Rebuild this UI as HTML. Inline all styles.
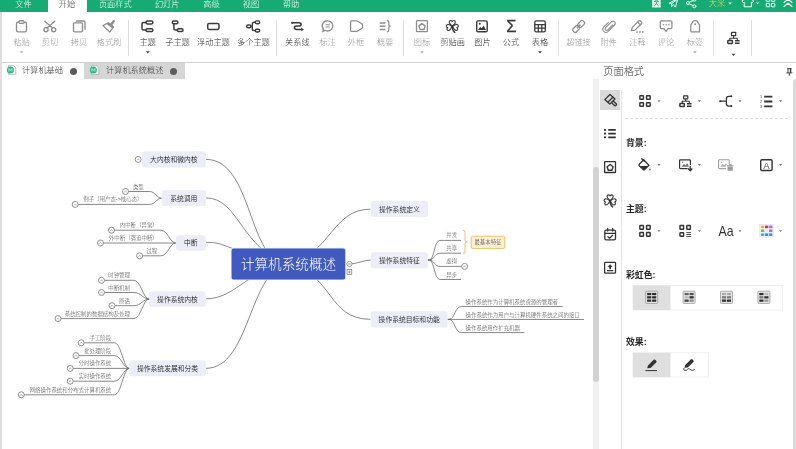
<!DOCTYPE html>
<html lang="zh-CN"><head><meta charset="utf-8"><title>计算机系统概述 - 思维导图</title>
<style>
html,body{margin:0;padding:0;}
body{width:796px;height:449px;overflow:hidden;background:#fff;position:relative;font-family:"Liberation Sans","Noto Sans CJK SC",sans-serif;}
#app{will-change:transform;position:absolute;left:0;top:0;width:796px;height:449px;overflow:hidden;background:#fff;}
.t{font-weight:300;position:absolute;height:14px;line-height:14px;white-space:nowrap;}
svg{overflow:visible;}
</style></head><body><div id="app">
<div style="position:absolute;left:0px;top:0px;width:796px;height:11.7px;background:#16ab74;"></div>
<div style="position:absolute;left:47.5px;top:0px;width:39px;height:12px;background:#fff;"></div>
<div class="t" style="top:-2.5px;left:-126.5px;width:300px;text-align:center;font-size:8.2px;color:#fff;font-weight:300;">文件</div>
<div class="t" style="top:-2.5px;left:-83px;width:300px;text-align:center;font-size:8.2px;color:#333;font-weight:300;">开始</div>
<div class="t" style="top:-2.5px;left:-34.7px;width:300px;text-align:center;font-size:8.2px;color:#fff;font-weight:300;">页面样式</div>
<div class="t" style="top:-2.5px;left:17.19999999999999px;width:300px;text-align:center;font-size:8.2px;color:#fff;font-weight:300;">幻灯片</div>
<div class="t" style="top:-2.5px;left:61.5px;width:300px;text-align:center;font-size:8.2px;color:#fff;font-weight:300;">高级</div>
<div class="t" style="top:-2.5px;left:101px;width:300px;text-align:center;font-size:8.2px;color:#fff;font-weight:300;">视图</div>
<div class="t" style="top:-2.5px;left:141px;width:300px;text-align:center;font-size:8.2px;color:#fff;font-weight:300;">帮助</div>
<div class="t" style="top:-2.8px;left:567px;width:300px;text-align:center;font-size:8.2px;color:#ffd84a;font-weight:300;">大米</div>
<div style="position:absolute;left:0px;top:12px;width:796px;height:50px;background:#fff;"></div>
<div style="position:absolute;left:0px;top:62px;width:796px;height:1px;background:#cfcfcf;"></div>
<div style="position:absolute;left:0px;top:12px;width:1.5px;height:437px;background:#dedede;"></div>
<div style="position:absolute;left:84px;top:63px;width:101px;height:15.5px;background:#d6d6d6;"></div>
<div class="t" style="top:63.599999999999994px;left:22px;text-align:left;font-size:8.2px;color:#333;font-weight:300;">计算机基础</div>
<div class="t" style="top:63.599999999999994px;left:106px;text-align:left;font-size:8.2px;color:#333;font-weight:300;">计算机系统概述</div>
<div style="position:absolute;left:70px;top:67.5px;width:7px;height:7px;border-radius:50%;background:#5c5c5c"></div>
<div style="position:absolute;left:170px;top:67.5px;width:7px;height:7px;border-radius:50%;background:#5c5c5c"></div>
<svg style="position:absolute;left:6.9px;top:65px;" width="10" height="11" viewBox="0 0 10 11"><path d="M1.400 0.600h5.200l2.200 2.200v6.800h-7.400z" fill="#fff" stroke="#a9a9a9" stroke-width="0.700"/><circle cx="3.400" cy="5" r="3.500" fill="#2bb585"/><path d="M1.900 3.400v3.200M1.900 3.600l1.500 1.800 1.500-1.800M4.900 3.400v3.200" stroke="#c9f7e4" stroke-width="0.800" fill="none"/></svg>
<svg style="position:absolute;left:89.9px;top:65px;" width="10" height="11" viewBox="0 0 10 11"><path d="M1.400 0.600h5.200l2.200 2.200v6.800h-7.400z" fill="#fff" stroke="#a9a9a9" stroke-width="0.700"/><circle cx="3.400" cy="5" r="3.500" fill="#2bb585"/><path d="M1.900 3.400v3.200M1.900 3.600l1.500 1.800 1.500-1.800M4.900 3.400v3.200" stroke="#c9f7e4" stroke-width="0.800" fill="none"/></svg>
<div style="position:absolute;left:593px;top:78.5px;width:6px;height:371px;background:#f1f1f1;"></div>
<div style="position:absolute;left:593px;top:167px;width:6px;height:215px;background:#d2d2d2;border-radius:3px 3px 3px 3px"></div>
<div style="position:absolute;left:792.5px;top:79px;width:4px;height:372px;background:#dadada;border-radius:3px 0 0 0"></div>
<div class="t" style="top:35.7px;left:-128.5px;width:300px;text-align:center;font-size:8.2px;color:#989898;font-weight:300;">粘贴</div>
<div class="t" style="top:35.7px;left:-100px;width:300px;text-align:center;font-size:8.2px;color:#989898;font-weight:300;">剪切</div>
<div class="t" style="top:35.7px;left:-71px;width:300px;text-align:center;font-size:8.2px;color:#989898;font-weight:300;">拷贝</div>
<div class="t" style="top:35.7px;left:-41px;width:300px;text-align:center;font-size:8.2px;color:#989898;font-weight:300;">格式刷</div>
<div class="t" style="top:35.7px;left:-2.1999999999999886px;width:300px;text-align:center;font-size:8.2px;color:#1e1e1e;font-weight:300;">主题</div>
<div class="t" style="top:35.7px;left:27.599999999999994px;width:300px;text-align:center;font-size:8.2px;color:#1e1e1e;font-weight:300;">子主题</div>
<div class="t" style="top:35.7px;left:63.5px;width:300px;text-align:center;font-size:8.2px;color:#1e1e1e;font-weight:300;">浮动主题</div>
<div class="t" style="top:35.7px;left:103.5px;width:300px;text-align:center;font-size:8.2px;color:#1e1e1e;font-weight:300;">多个主题</div>
<div class="t" style="top:35.7px;left:147.3px;width:300px;text-align:center;font-size:8.2px;color:#1e1e1e;font-weight:300;">关系线</div>
<div class="t" style="top:35.7px;left:177.5px;width:300px;text-align:center;font-size:8.2px;color:#989898;font-weight:300;">标注</div>
<div class="t" style="top:35.7px;left:206px;width:300px;text-align:center;font-size:8.2px;color:#989898;font-weight:300;">外框</div>
<div class="t" style="top:35.7px;left:235px;width:300px;text-align:center;font-size:8.2px;color:#989898;font-weight:300;">概要</div>
<div class="t" style="top:35.7px;left:272px;width:300px;text-align:center;font-size:8.2px;color:#989898;font-weight:300;">图标</div>
<div class="t" style="top:35.7px;left:302.7px;width:300px;text-align:center;font-size:8.2px;color:#1e1e1e;font-weight:300;">剪贴画</div>
<div class="t" style="top:35.7px;left:332.5px;width:300px;text-align:center;font-size:8.2px;color:#1e1e1e;font-weight:300;">图片</div>
<div class="t" style="top:35.7px;left:361px;width:300px;text-align:center;font-size:8.2px;color:#1e1e1e;font-weight:300;">公式</div>
<div class="t" style="top:35.7px;left:390px;width:300px;text-align:center;font-size:8.2px;color:#1e1e1e;font-weight:300;">表格</div>
<div class="t" style="top:35.7px;left:428.5px;width:300px;text-align:center;font-size:8.2px;color:#989898;font-weight:300;">超链接</div>
<div class="t" style="top:35.7px;left:458.6px;width:300px;text-align:center;font-size:8.2px;color:#989898;font-weight:300;">附件</div>
<div class="t" style="top:35.7px;left:487.5px;width:300px;text-align:center;font-size:8.2px;color:#989898;font-weight:300;">注释</div>
<div class="t" style="top:35.7px;left:516px;width:300px;text-align:center;font-size:8.2px;color:#989898;font-weight:300;">评论</div>
<div class="t" style="top:35.7px;left:545px;width:300px;text-align:center;font-size:8.2px;color:#989898;font-weight:300;">标签</div>
<div style="position:absolute;left:127.80000000000001px;top:19.5px;width:1px;height:36.5px;background:#dedede;"></div>
<div style="position:absolute;left:275.9px;top:19.5px;width:1px;height:36.5px;background:#dedede;"></div>
<div style="position:absolute;left:402.9px;top:19.5px;width:1px;height:36.5px;background:#dedede;"></div>
<div style="position:absolute;left:557.8px;top:19.5px;width:1px;height:36.5px;background:#dedede;"></div>
<div style="position:absolute;left:712.9px;top:19.5px;width:1px;height:36.5px;background:#dedede;"></div>
<div style="position:absolute;left:750.9px;top:19.5px;width:1px;height:36.5px;background:#dedede;"></div>
<svg style="position:absolute;left:0px;top:0px;" width="796" height="62" viewBox="0 0 796 62"><path d="M19.6 51.3h3.8l-1.9 2.2z" fill="#b0b0b0"/><path d="M145.9 51.3h3.8l-1.9 2.2z" fill="#444"/><path d="M420.1 51.3h3.8l-1.9 2.2z" fill="#b0b0b0"/><path d="M538.1 51.3h3.8l-1.9 2.2z" fill="#444"/><path d="M693.1 51.3h3.8l-1.9 2.2z" fill="#b0b0b0"/><path d="M731.6 53.8h3.8l-1.9 2.2z" fill="#444"/><g fill="none" stroke="#8e8e8e" stroke-width="1.35" stroke-linecap="round" stroke-linejoin="round"><rect x="16.5" y="22.2" width="10" height="9.6" rx="1.5"/><rect x="18.9" y="20.7" width="5.2" height="2.6" rx="1.3" fill="#fff"/></g><g fill="none" stroke="#8e8e8e" stroke-width="1.35" stroke-linecap="round" stroke-linejoin="round"><path d="M44.8 21.2L52.6 28M54.8 21.2L47 28"/><circle cx="46" cy="29.7" r="2.05"/><circle cx="53.7" cy="29.7" r="2.05"/></g><g fill="none" stroke="#8e8e8e" stroke-width="1.35" stroke-linecap="round" stroke-linejoin="round"><rect x="73.5" y="22.9" width="9" height="8.900" rx="1"/><path d="M76.4 21h7.400q1.200 0 1.200 1.200v7"/></g><g fill="none" stroke="#8e8e8e" stroke-width="1.25" stroke-linecap="round" stroke-linejoin="round"><path d="M108.300 22.700L113.500 26.800L109.600 32L103 25.600Z"/><path d="M111.300 24.300L113.700 21.200" stroke-width="2.500"/></g><path d="M108.300 22.300L114 26.700L112.500 28.600L106.900 24.200Z" fill="#8e8e8e"/><g fill="none" stroke="#3a3a3a" stroke-width="1.5" stroke-linecap="round" stroke-linejoin="round"><rect x="146" y="21.100" width="6.900" height="2.800" rx="1.400"/><rect x="146" y="28.800" width="6.900" height="2.800" rx="1.400"/><path d="M145.800 22.600h-2.400q-1.400 0-1.400 1.400v4.700q0 1.400 1.400 1.400h2.400"/></g><g fill="none" stroke="#3a3a3a" stroke-width="1.5" stroke-linecap="round" stroke-linejoin="round"><rect x="172.300" y="21.100" width="5.600" height="2.700" rx="1.350"/><rect x="177.300" y="28.800" width="5.700" height="2.800" rx="1.400"/><path d="M173.900 24.500v4.200q0 1.400 1.400 1.400h1.400"/></g><g fill="none" stroke="#3a3a3a" stroke-width="1.5" stroke-linecap="round" stroke-linejoin="round"><rect x="207.700" y="23.600" width="11.300" height="5.900" rx="1.400"/></g><g fill="none" stroke="#3a3a3a" stroke-width="1.4" stroke-linecap="round" stroke-linejoin="round"><rect x="246.700" y="25" width="4.200" height="2.800" rx="1.400"/><rect x="255.300" y="20.900" width="4.400" height="2.800" rx="1.400"/><rect x="255.300" y="29.200" width="4.400" height="2.800" rx="1.400"/><path d="M251.100 26.400h1.200M255.100 22.300h-1q-1.800 0-1.800 1.800v4.700q0 1.800 1.800 1.800h1"/></g><g fill="none" stroke="#3a3a3a" stroke-width="1.5" stroke-linecap="round" stroke-linejoin="round"><path d="M292.500 22.800H298.900Q301.100 22.800 301.100 24.400Q301.100 26.100 298.900 26.100H296.600Q294.400 26.100 294.400 27.700Q294.400 29.400 296.600 29.400H301.200"/></g><circle cx="292.200" cy="22.800" r="1.150" fill="#3a3a3a"/><path d="M301.200 27.500l2.700 1.900-2.700 1.900z" fill="#3a3a3a"/><g fill="none" stroke="#8e8e8e" stroke-width="1.3" stroke-linecap="round" stroke-linejoin="round"><path d="M327.800 20.800a5.100 5.100 0 1 1 -2.800 9.400l-2.200 1.600 .500-2.800a5.100 5.100 0 0 1 4.500-8.200z"/><path d="M325.600 24.800h4.300M325.600 27h4.300" stroke-width="1.100" stroke-linecap="butt"/></g><g fill="none" stroke="#8e8e8e" stroke-width="1.3" stroke-linecap="round" stroke-linejoin="round"><path d="M351.400 20.900h5q.800 0 1.400 .400l4.200 2.700q.500 .400 .500 1v2.300q0 .600-.500 1l-4.200 2.700q-.600 .400-1.400 .400h-5q-.800 0-.800-.800v-8.900q0-.800 .800-.800z"/></g><g fill="none" stroke="#8e8e8e" stroke-width="1.45" stroke-linecap="round" stroke-linejoin="round"><path d="M379.700 22.900h5.800M379.700 26.200h5.800M379.700 29.500h5.800" stroke-linecap="butt"/></g><g fill="none" stroke="#8e8e8e" stroke-width="1.2" stroke-linecap="round" stroke-linejoin="round"><path d="M387.300 20.600q1.500 0 1.500 1.500v2.600q0 1.500 1.500 1.500q-1.500 0-1.500 1.500v2.600q0 1.500-1.500 1.500"/></g><g fill="none" stroke="#8e8e8e" stroke-width="1.3" stroke-linecap="round" stroke-linejoin="round"><rect x="416.500" y="20.700" width="10.900" height="11" rx="0.800"/><path d="M422 23.600l3.100 2.300-1.200 3.600h-3.800l-1.200-3.600z" stroke-width="1.400"/></g><g fill="none" stroke="#3a3a3a" stroke-width="1.25" stroke-linecap="round" stroke-linejoin="round"><path d="M0 0C-1.500 -1.300 -3.300 -2.500 -3.300 -4.100C-3.300 -5.300 -2.500 -5.900 -1.700 -5.900C-.900 -5.900 -.200 -5.400 0 -4.700C.200 -5.400 .900 -5.900 1.700 -5.900C2.500 -5.900 3.300 -5.300 3.300 -4.100C3.300 -2.500 1.500 -1.300 0 0Z" transform="translate(452.3 26.0) scale(0.93)"/><path d="M0 0C-1.500 -1.300 -3.300 -2.500 -3.300 -4.100C-3.300 -5.300 -2.500 -5.900 -1.700 -5.900C-.900 -5.900 -.200 -5.400 0 -4.700C.200 -5.400 .900 -5.900 1.700 -5.900C2.500 -5.900 3.300 -5.300 3.300 -4.100C3.300 -2.500 1.500 -1.300 0 0Z" transform="translate(452.0 26.5) rotate(-104) scale(0.93)"/><path d="M0 0C-1.500 -1.300 -3.300 -2.500 -3.300 -4.100C-3.300 -5.300 -2.500 -5.900 -1.700 -5.900C-.900 -5.900 -.200 -5.400 0 -4.700C.200 -5.400 .900 -5.900 1.700 -5.900C2.500 -5.900 3.300 -5.300 3.300 -4.100C3.300 -2.500 1.500 -1.300 0 0Z" transform="translate(452.6 26.5) rotate(104) scale(0.93)"/><path d="M452.3 26.3q0 4.200 2.500 6.200" stroke-width="1.45"/></g><g fill="none" stroke="#3a3a3a" stroke-width="1.4" stroke-linecap="round" stroke-linejoin="round"><rect x="476.700" y="20.900" width="10.500" height="10.900" rx="1.300"/></g><path d="M478 29.900l2.300-3.200 1.400 1.500 1.900-2.700 2.400 4.400z" fill="#3a3a3a"/><circle cx="479.700" cy="23.700" r="1" fill="#3a3a3a"/><text x="511.300" y="32.400" font-size="16.600" text-anchor="middle" fill="#3a3a3a" stroke="#3a3a3a" stroke-width="0.280" font-family="Liberation Sans, sans-serif">Σ</text><g fill="none" stroke="#3a3a3a" stroke-width="1.3" stroke-linecap="round" stroke-linejoin="round"><rect x="534.800" y="20.900" width="10.500" height="11" rx="1.300"/></g><g fill="none" stroke="#3a3a3a" stroke-width="1.25" stroke-linecap="round" stroke-linejoin="round"><path d="M534.800 24.600h10.500M534.800 28.200h10.500M538.300 24.600v7.300M541.800 24.600v7.300" stroke-linecap="butt"/></g><g fill="none" stroke="#8e8e8e" stroke-width="1.3" stroke-linecap="round" stroke-linejoin="round"><rect x="-3.500" y="-2.300" width="7" height="4.600" rx="1.500" transform="translate(581.200 23.900) rotate(-45)"/><rect x="-3.500" y="-2.300" width="7" height="4.600" rx="1.500" transform="translate(576.100 29) rotate(-45)"/><path d="M577.300 27.800l2.700-2.700" stroke-width="1.500"/></g><g fill="none" stroke="#8e8e8e" stroke-width="1.1" stroke-linecap="round" stroke-linejoin="round"><path d="M612.600 25l-4.800 4.800q-1.100 1.100-2.200 0t0-2.200l5.800-5.800q1.600-1.600 3.200 0t0 3.200l-6.400 6.400q-2.200 2.200-4.400 0t0-4.400l4.600-4.600"/></g><g fill="none" stroke="#8e8e8e" stroke-width="1.25" stroke-linecap="round" stroke-linejoin="round"><path d="M631.400 30.600l.900-3.200 6.400-6.400q.900-.900 1.800 0l.900 .900q.900 .900 0 1.800l-6.400 6.400z"/><path d="M637.700 22.100l2.700 2.700"/></g><rect x="636.200" y="31.300" width="1.500" height="1.400" fill="#8e8e8e"/><rect x="639.100" y="31.300" width="1.500" height="1.400" fill="#8e8e8e"/><rect x="642" y="31.300" width="1.500" height="1.400" fill="#8e8e8e"/><g fill="none" stroke="#8e8e8e" stroke-width="1.3" stroke-linecap="round" stroke-linejoin="round"><path d="M661.300 20.800h9.600q1 0 1 1v5.800q0 1-1 1h-2.900l-2 2.700-2-2.700h-2.700q-1 0-1-1v-5.800q0-1 1-1z"/></g><circle cx="663.300" cy="24.700" r="0.800" fill="#8e8e8e"/><circle cx="666.100" cy="24.700" r="0.800" fill="#8e8e8e"/><circle cx="668.900" cy="24.700" r="0.800" fill="#8e8e8e"/><g fill="none" stroke="#8e8e8e" stroke-width="1.3" stroke-linecap="round" stroke-linejoin="round"><path d="M690.800 31.400v-6.600l2.500-3.600q.400-.500 1-.500h1.800q.600 0 1 .500l2.400 3.600v6.600q0 .400-.400 .400h-7.900q-.400 0-.400-.400z"/></g><circle cx="695.200" cy="24.300" r="0.950" fill="#8e8e8e"/><g fill="none" stroke="#3a3a3a" stroke-width="1.3" stroke-linecap="round" stroke-linejoin="round"><rect x="731.500" y="32.400" width="4.200" height="3.200" rx="0.300"/><path d="M733.600 36v2.200h-3.800v1.600M733.600 38.200h3.700v1.400" stroke-width="1.100"/><rect x="727.800" y="40.400" width="4.600" height="3" rx="0.600" stroke-width="1.500"/><path d="M735 40.700h4.600M735 43.200h4.600" stroke-width="1.500" stroke-linecap="butt"/></g></svg>
<svg style="position:absolute;left:0px;top:0px;overflow:hidden;" width="796" height="12" viewBox="0 0 796 12"><rect x="652.100" y="-1" width="8.600" height="8.500" fill="#fff" opacity="0.880"/><path d="M654 1.600h1.800v-2.600M658.800 1.600h-1.800v-2.600M654.600 5.600l1.800-2 1.800 2M656.400 3.600v-2" fill="none" stroke="#16ab74" stroke-width="0.900"/><g fill="none" stroke="#fff" stroke-width="1.0" stroke-linecap="round" stroke-linejoin="round"><path d="M669.400 3l8.400-4.200-2.400 8.400-2.200-2.600-1.600 2.200v-3z"/><path d="M677.600-1l-6 4.800"/></g><g fill="none" stroke="#fff" stroke-width="1.0" stroke-linecap="round" stroke-linejoin="round"><circle cx="694.400" cy="-0.200" r="1.500"/><circle cx="688" cy="3" r="1.500"/><circle cx="694.400" cy="6.300" r="1.500"/><path d="M689.400 2.300l3.600-1.800M689.400 3.700l3.600 1.900"/></g><path d="M728.400 2.400h3.400l-1.700 2z" fill="#fff"/><path d="M755.900 2.400h3.400l-1.700 2z" fill="#fff"/><g fill="none" stroke="#fff" stroke-width="1.0" stroke-linecap="round" stroke-linejoin="round"><path d="M745-1.200l-3 2 1.200 2 1-.600v4.600h7.200v-4.600l1 .600 1.200-2-3-2q-1.800 1.600-3.600 0z"/></g><g fill="none" stroke="#fff" stroke-width="1.0" stroke-linecap="round" stroke-linejoin="round"><rect x="766.200" y="-2" width="3.400" height="3.400" rx="0.600"/><rect x="771.400" y="-2" width="3.400" height="3.400" rx="0.600"/><rect x="766.200" y="3.400" width="3.400" height="3.400" rx="0.600"/><rect x="771.400" y="3.400" width="3.400" height="3.400" rx="0.600"/></g><g fill="none" stroke="#fff" stroke-width="1.1" stroke-linecap="round" stroke-linejoin="round"><path d="M784 2.500l4-3.200 4 3.200M784 6.500l4-3.200 4 3.200"/></g></svg>
<svg style="position:absolute;left:0px;top:0px;" width="796" height="449" viewBox="0 0 796 449"><path d="M206 159.4C253.5 159.4 247.5 264.9 288.4 264" fill="none" stroke="#606060" stroke-width="0.75"/><path d="M206 197.9C238.9 197.9 241.1 249.5 288.4 264" fill="none" stroke="#606060" stroke-width="0.75"/><path d="M206 242.4C227.2 242.4 211.9 245.5 288.4 264" fill="none" stroke="#606060" stroke-width="0.75"/><path d="M206 298.8C235.8 298.8 247.9 268.9 288.4 264" fill="none" stroke="#606060" stroke-width="0.75"/><path d="M206 368.3C250.6 368.3 248.4 269.6 288.4 264" fill="none" stroke="#606060" stroke-width="0.75"/><path d="M370.6 209.2C331.7 209.2 331.0 254.0 288.4 264" fill="none" stroke="#606060" stroke-width="0.75"/><path d="M370.6 319.3C327.1 319.3 333.4 274.0 288.4 264" fill="none" stroke="#606060" stroke-width="0.75"/><path d="M370.8 260C364 260.2 358 263.200 352 263.800" fill="none" stroke="#606060" stroke-width="0.75"/><path d="M128.6 191.5L149.5 191.5C154.99 191.5 156.82 198.2 161.7 198.2" fill="none" stroke="#606060" stroke-width="0.75"/><circle cx="125.5" cy="191.5" r="3" fill="#fff" stroke="#606060" stroke-width="0.7"/><path d="M124.3 192.4l1.200-1.500 1.200 1.500" fill="none" stroke="#606060" stroke-width="0.45"/><path d="M78.3 204.4L149.5 204.4C154.99 204.4 156.82 198.2 161.7 198.2" fill="none" stroke="#606060" stroke-width="0.75"/><circle cx="75.2" cy="204.4" r="3" fill="#fff" stroke="#606060" stroke-width="0.7"/><path d="M74.0 205.3l1.200-1.500 1.200 1.500" fill="none" stroke="#606060" stroke-width="0.45"/><path d="M114.6 230.2L161 230.2C167.66 230.2 169.88 243 175.8 243" fill="none" stroke="#606060" stroke-width="0.75"/><circle cx="111.5" cy="230.2" r="3" fill="#fff" stroke="#606060" stroke-width="0.7"/><path d="M110.3 231.1l1.200-1.500 1.200 1.500" fill="none" stroke="#606060" stroke-width="0.45"/><path d="M103.6 243L175.8 243" fill="none" stroke="#606060" stroke-width="0.75"/><circle cx="100.5" cy="243" r="3" fill="#fff" stroke="#606060" stroke-width="0.7"/><path d="M99.3 243.9l1.200-1.500 1.200 1.500" fill="none" stroke="#606060" stroke-width="0.45"/><path d="M142.7 255.8L161 255.8C167.66 255.8 169.88 243 175.8 243" fill="none" stroke="#606060" stroke-width="0.75"/><circle cx="139.6" cy="255.8" r="3" fill="#fff" stroke="#606060" stroke-width="0.7"/><path d="M138.4 256.7l1.200-1.500 1.200 1.500" fill="none" stroke="#606060" stroke-width="0.45"/><path d="M104.6 280.3L134 280.3C140.84 280.3 143.12 299 149.2 299" fill="none" stroke="#606060" stroke-width="0.75"/><circle cx="101.5" cy="280.3" r="3" fill="#fff" stroke="#606060" stroke-width="0.7"/><path d="M100.3 281.2l1.200-1.500 1.200 1.500" fill="none" stroke="#606060" stroke-width="0.45"/><path d="M104.6 292.5L134 292.5C140.84 292.5 143.12 299 149.2 299" fill="none" stroke="#606060" stroke-width="0.75"/><circle cx="101.5" cy="292.5" r="3" fill="#fff" stroke="#606060" stroke-width="0.7"/><path d="M100.3 293.4l1.200-1.500 1.200 1.500" fill="none" stroke="#606060" stroke-width="0.45"/><path d="M115.1 305.7L134 305.7C140.84 305.7 143.12 299 149.2 299" fill="none" stroke="#606060" stroke-width="0.75"/><circle cx="112" cy="305.7" r="3" fill="#fff" stroke="#606060" stroke-width="0.7"/><path d="M110.8 306.59999999999997l1.200-1.500 1.200 1.500" fill="none" stroke="#606060" stroke-width="0.45"/><path d="M61.1 318.6L134 318.6C140.84 318.6 143.12 299 149.2 299" fill="none" stroke="#606060" stroke-width="0.75"/><circle cx="58" cy="318.6" r="3" fill="#fff" stroke="#606060" stroke-width="0.7"/><path d="M56.8 319.5l1.200-1.500 1.200 1.500" fill="none" stroke="#606060" stroke-width="0.45"/><path d="M84.3 342.8L114.5 342.8C121.16000000000001 342.8 123.38000000000001 368.4 129.3 368.4" fill="none" stroke="#606060" stroke-width="0.75"/><circle cx="81.2" cy="342.8" r="3" fill="#fff" stroke="#606060" stroke-width="0.7"/><path d="M80.0 343.7l1.200-1.500 1.200 1.500" fill="none" stroke="#606060" stroke-width="0.45"/><path d="M79.1 355.6L114.5 355.6C121.16000000000001 355.6 123.38000000000001 368.4 129.3 368.4" fill="none" stroke="#606060" stroke-width="0.75"/><circle cx="76" cy="355.6" r="3" fill="#fff" stroke="#606060" stroke-width="0.7"/><path d="M74.8 356.5l1.200-1.500 1.200 1.500" fill="none" stroke="#606060" stroke-width="0.45"/><path d="M73.3 368.4L129.3 368.4" fill="none" stroke="#606060" stroke-width="0.75"/><circle cx="70.2" cy="368.4" r="3" fill="#fff" stroke="#606060" stroke-width="0.7"/><path d="M69.0 369.29999999999995l1.200-1.500 1.200 1.500" fill="none" stroke="#606060" stroke-width="0.45"/><path d="M73.3 381.2L114.5 381.2C121.16000000000001 381.2 123.38000000000001 368.4 129.3 368.4" fill="none" stroke="#606060" stroke-width="0.75"/><circle cx="70.2" cy="381.2" r="3" fill="#fff" stroke="#606060" stroke-width="0.7"/><path d="M69.0 382.09999999999997l1.200-1.500 1.200 1.500" fill="none" stroke="#606060" stroke-width="0.45"/><path d="M24.400000000000002 394.8L114.5 394.8C121.16000000000001 394.8 123.38000000000001 368.4 129.3 368.4" fill="none" stroke="#606060" stroke-width="0.75"/><circle cx="21.3" cy="394.8" r="3" fill="#fff" stroke="#606060" stroke-width="0.7"/><path d="M20.1 395.7l1.200-1.500 1.200 1.500" fill="none" stroke="#606060" stroke-width="0.45"/><circle cx="138.200" cy="159.400" r="3" fill="#fff" stroke="#606060" stroke-width="0.7"/><path d="M137 160.300l1.200-1.500 1.200 1.500" fill="none" stroke="#606060" stroke-width="0.45"/><path d="M427.8 260L429.40000000000003 260C434.17 260 434.17 240.4 440 240.4L461 240.4" fill="none" stroke="#606060" stroke-width="0.75"/><path d="M427.8 260L429.40000000000003 260C434.17 260 434.17 253.2 440 253.2L461 253.2" fill="none" stroke="#606060" stroke-width="0.75"/><path d="M427.8 260L429.40000000000003 260C434.17 260 434.17 266.4 440 266.4L461.6 266.4" fill="none" stroke="#606060" stroke-width="0.75"/><circle cx="464.6" cy="266.4" r="3" fill="#fff" stroke="#606060" stroke-width="0.7"/><path d="M463.40000000000003 267.29999999999995l1.200-1.500 1.200 1.500" fill="none" stroke="#606060" stroke-width="0.45"/><path d="M427.8 260L429.40000000000003 260C434.17 260 434.17 279.5 440 279.5L461 279.5" fill="none" stroke="#606060" stroke-width="0.75"/><path d="M447.6 319.4L449.20000000000005 319.4C454.735 319.4 454.735 306.5 461.5 306.5L562.6 306.5" fill="none" stroke="#606060" stroke-width="0.75"/><path d="M447.6 319.4L584 319.5" fill="none" stroke="#606060" stroke-width="0.75"/><path d="M447.6 319.4L449.20000000000005 319.4C454.735 319.4 454.735 332.6 461.5 332.6L524.4 332.6" fill="none" stroke="#606060" stroke-width="0.75"/><path d="M462.800 230.200q2.200 0 2.200 2.200v7.200q0 2.200 2.200 2.200q-2.200 0-2.200 2.200v7.200q0 2.200-2.200 2.200" fill="none" stroke="#f0ad3c" stroke-width="0.8"/><rect x="471.200" y="236.200" width="33.600" height="12.200" rx="1.500" fill="#fdf1d6" stroke="#f0ad3c" stroke-width="0.8"/><rect x="142" y="151.2" width="63.80000000000001" height="16.400000000000006" rx="2.600" fill="#ecedf7"/><rect x="161.7" y="190.2" width="44.10000000000002" height="15.800000000000011" rx="2.600" fill="#ecedf7"/><rect x="175.8" y="235.2" width="30.0" height="15.5" rx="2.600" fill="#ecedf7"/><rect x="149.2" y="291.2" width="56.60000000000002" height="15.600000000000023" rx="2.600" fill="#ecedf7"/><rect x="129.3" y="360.6" width="76.5" height="15.599999999999966" rx="2.600" fill="#ecedf7"/><rect x="370.8" y="201" width="57.19999999999999" height="16" rx="2.600" fill="#ecedf7"/><rect x="370.8" y="252.2" width="57.19999999999999" height="16.0" rx="2.600" fill="#ecedf7"/><rect x="370.8" y="311.2" width="76.80000000000001" height="16.400000000000034" rx="2.600" fill="#ecedf7"/><rect x="230.900" y="247.800" width="115" height="32.300" rx="2.500" fill="#d9e5ff"/><rect x="231.600" y="248.500" width="113.600" height="31" rx="2" fill="#405abf"/><circle cx="349.400" cy="264" r="2.600" fill="#fff" stroke="#606060" stroke-width="0.600"/><path d="M348 264h2.800" stroke="#606060" stroke-width="0.550"/><rect x="347" y="269.600" width="4.800" height="4.800" fill="#fff" stroke="#606060" stroke-width="0.600"/><path d="M348 272h2.800M349.400 270.600v2.800" stroke="#606060" stroke-width="0.550"/></svg>
<div class="t" style="top:179.5px;left:-156.2px;width:300px;text-align:right;font-size:5.45px;color:#484848;font-weight:300;">类型</div>
<div class="t" style="top:192.4px;left:-157.39999999999998px;width:300px;text-align:right;font-size:5.45px;color:#484848;font-weight:300;">例子（用户态-&gt;核心态）</div>
<div class="t" style="top:218.2px;left:-142.2px;width:300px;text-align:right;font-size:5.45px;color:#484848;font-weight:300;">内中断（异常）</div>
<div class="t" style="top:231.0px;left:-142.2px;width:300px;text-align:right;font-size:5.45px;color:#484848;font-weight:300;">外中断（强迫中断）</div>
<div class="t" style="top:243.8px;left:-142.7px;width:300px;text-align:right;font-size:5.45px;color:#484848;font-weight:300;">过程</div>
<div class="t" style="top:268.3px;left:-170px;width:300px;text-align:right;font-size:5.45px;color:#484848;font-weight:300;">时钟管理</div>
<div class="t" style="top:280.5px;left:-170px;width:300px;text-align:right;font-size:5.45px;color:#484848;font-weight:300;">中断机制</div>
<div class="t" style="top:293.7px;left:-170px;width:300px;text-align:right;font-size:5.45px;color:#484848;font-weight:300;">原语</div>
<div class="t" style="top:306.6px;left:-170px;width:300px;text-align:right;font-size:5.45px;color:#484848;font-weight:300;">系统控制的数据结构及处理</div>
<div class="t" style="top:330.8px;left:-188.8px;width:300px;text-align:right;font-size:5.45px;color:#484848;font-weight:300;">手工阶段</div>
<div class="t" style="top:343.6px;left:-188.8px;width:300px;text-align:right;font-size:5.45px;color:#484848;font-weight:300;">批处理阶段</div>
<div class="t" style="top:356.4px;left:-188.8px;width:300px;text-align:right;font-size:5.45px;color:#484848;font-weight:300;">分时操作系统</div>
<div class="t" style="top:369.2px;left:-188.8px;width:300px;text-align:right;font-size:5.45px;color:#484848;font-weight:300;">实时操作系统</div>
<div class="t" style="top:382.8px;left:-188.8px;width:300px;text-align:right;font-size:5.45px;color:#484848;font-weight:300;">网络操作系统和分布式计算机系统</div>
<div class="t" style="top:228.4px;left:446.3px;text-align:left;font-size:5.45px;color:#484848;font-weight:300;">并发</div>
<div class="t" style="top:241.2px;left:446.3px;text-align:left;font-size:5.45px;color:#484848;font-weight:300;">共享</div>
<div class="t" style="top:254.39999999999998px;left:446.3px;text-align:left;font-size:5.45px;color:#484848;font-weight:300;">虚拟</div>
<div class="t" style="top:267.5px;left:446.3px;text-align:left;font-size:5.45px;color:#484848;font-weight:300;">异步</div>
<div class="t" style="top:294.5px;left:465.6px;text-align:left;font-size:5.45px;color:#484848;font-weight:300;">操作系统作为计算机系统资源的管理者</div>
<div class="t" style="top:307.5px;left:465.6px;text-align:left;font-size:5.45px;color:#484848;font-weight:300;">操作系统作为用户与计算机硬件系统之间的接口</div>
<div class="t" style="top:320.6px;left:465.6px;text-align:left;font-size:5.45px;color:#484848;font-weight:300;">操作系统用作扩充机器</div>
<div class="t" style="top:235.3px;left:338px;width:300px;text-align:center;font-size:5.45px;color:#333;font-weight:300;">最基本特征</div>
<div class="t" style="top:152.89999999999998px;left:23.900000000000006px;width:300px;text-align:center;font-size:6.8px;color:#1c1c1c;font-weight:350;">大内核和微内核</div>
<div class="t" style="top:191.6px;left:33.75px;width:300px;text-align:center;font-size:6.8px;color:#1c1c1c;font-weight:350;">系统调用</div>
<div class="t" style="top:236.45px;left:40.80000000000001px;width:300px;text-align:center;font-size:6.8px;color:#1c1c1c;font-weight:350;">中断</div>
<div class="t" style="top:292.5px;left:27.5px;width:300px;text-align:center;font-size:6.8px;color:#1c1c1c;font-weight:350;">操作系统内核</div>
<div class="t" style="top:361.9px;left:17.55000000000001px;width:300px;text-align:center;font-size:6.8px;color:#1c1c1c;font-weight:350;">操作系统发展和分类</div>
<div class="t" style="top:202.5px;left:249.39999999999998px;width:300px;text-align:center;font-size:6.8px;color:#1c1c1c;font-weight:350;">操作系统定义</div>
<div class="t" style="top:253.7px;left:249.39999999999998px;width:300px;text-align:center;font-size:6.8px;color:#1c1c1c;font-weight:350;">操作系统特征</div>
<div class="t" style="top:312.9px;left:259.20000000000005px;width:300px;text-align:center;font-size:6.8px;color:#1c1c1c;font-weight:350;">操作系统目标和功能</div>
<div class="t" style="top:257.6px;left:138.5px;width:300px;text-align:center;font-size:13.6px;color:#fff;font-weight:300;">计算机系统概述</div>
<div style="position:absolute;left:599px;top:63px;width:197px;height:386px;background:#fff;"></div>
<div style="position:absolute;left:792.5px;top:79px;width:3.5px;height:370px;background:#dadada;border-radius:3px 0 0 0;"></div>
<div class="t" style="top:64.8px;left:603.3px;text-align:left;font-size:10.2px;color:#333;font-weight:300;">页面格式</div>
<div style="position:absolute;left:621px;top:89.5px;width:0.8px;height:360px;background:#e4e4e4;"></div>
<div style="position:absolute;left:600px;top:90px;width:20px;height:20px;background:#d9d9d9;"></div>
<div style="position:absolute;left:625px;top:117.600px;width:163px;height:0;border-top:0.8px dashed #e0e0e0"></div>
<svg style="position:absolute;left:0px;top:0px;" width="796" height="449" viewBox="0 0 796 449"><path d="M787.200 68.600h4.400M788 68.600v4.200M790.800 68.600v4.200M786.400 72.900h6M789.300 73v2.800" fill="none" stroke="#333" stroke-width="0.9"/><path d="M789.800 68.600h1v4.200h-1z" fill="#333"/><g fill="none" stroke="#333" stroke-width="1.3" stroke-linecap="round" stroke-linejoin="round"><path d="M604.800 99.600L610 94.500L615 99L609.800 104.100Z"/><path d="M608.300 101.700L612.800 97.300"/><rect x="0" y="-1.200" width="5.200" height="2.400" rx="0.900" transform="translate(612.200 101.800) rotate(42)" fill="#d9d9d9"/></g><g fill="none" stroke="#333" stroke-width="1.8" stroke-linecap="round" stroke-linejoin="round"><path d="M608.200 129.900h7.600M608.200 133.600h7.600M608.200 137.300h7.600" stroke-linecap="butt"/></g><rect x="604" y="129" width="2" height="1.800" fill="#333"/><rect x="604" y="132.700" width="2" height="1.800" fill="#333"/><rect x="604" y="136.400" width="2" height="1.800" fill="#333"/><g fill="none" stroke="#333" stroke-width="1.3" stroke-linecap="round" stroke-linejoin="round"><rect x="604.600" y="161.600" width="10.900" height="10.900" rx="0.600"/><path d="M610.100 164.500l3 2.200-1.150 3.500h-3.700l-1.150-3.500z" stroke-width="1.400"/></g><g fill="none" stroke="#333" stroke-width="1.2" stroke-linecap="round" stroke-linejoin="round"><path d="M0 0C-1.500 -1.300 -3.300 -2.500 -3.300 -4.100C-3.300 -5.300 -2.500 -5.900 -1.700 -5.900C-.900 -5.900 -.200 -5.400 0 -4.700C.200 -5.400 .900 -5.900 1.700 -5.900C2.500 -5.900 3.300 -5.300 3.300 -4.100C3.300 -2.500 1.500 -1.300 0 0Z" transform="translate(610.1 200.39999999999998) scale(0.93)"/><path d="M0 0C-1.500 -1.300 -3.300 -2.500 -3.300 -4.100C-3.300 -5.300 -2.500 -5.900 -1.700 -5.900C-.900 -5.900 -.200 -5.400 0 -4.700C.200 -5.400 .900 -5.900 1.700 -5.900C2.500 -5.900 3.300 -5.300 3.300 -4.100C3.300 -2.500 1.500 -1.300 0 0Z" transform="translate(609.8000000000001 200.89999999999998) rotate(-104) scale(0.93)"/><path d="M0 0C-1.500 -1.300 -3.300 -2.500 -3.300 -4.100C-3.300 -5.300 -2.500 -5.900 -1.700 -5.900C-.900 -5.900 -.200 -5.400 0 -4.700C.200 -5.400 .900 -5.900 1.700 -5.900C2.500 -5.900 3.300 -5.300 3.300 -4.100C3.300 -2.500 1.500 -1.300 0 0Z" transform="translate(610.4 200.89999999999998) rotate(104) scale(0.93)"/><path d="M610.1 200.7q0 4.200 2.500 6.200" stroke-width="1.4"/></g><g fill="none" stroke="#333" stroke-width="1.3" stroke-linecap="round" stroke-linejoin="round"><rect x="604.800" y="230.200" width="10.700" height="9.700" rx="1.400"/><path d="M604.800 233.400h10.700M607.700 228.500v2.600M612.600 228.500v2.600"/><path d="M607.900 236.700l1.700 1.500 3-2.900" stroke-width="1.200"/></g><g fill="none" stroke="#333" stroke-width="1.3" stroke-linecap="round" stroke-linejoin="round"><rect x="604.600" y="262.300" width="10.900" height="10.900" rx="0.800"/><path d="M607.500 270.700h5.200" stroke-width="1.200"/></g><path d="M610.100 264.300l2.500 2.700h-1.600v2h-1.800v-2h-1.600z" fill="#333"/><g fill="none" stroke="#333" stroke-width="1.45" stroke-linecap="round" stroke-linejoin="round"><rect x="639.85" y="95.65" width="3.600" height="3.600" rx="0.500"/><rect x="639.85" y="102.65" width="3.600" height="3.600" rx="0.500"/><rect x="646.5500000000001" y="95.65" width="3.600" height="3.600" rx="0.500"/><rect x="646.5500000000001" y="102.65" width="3.600" height="3.600" rx="0.500"/></g><path d="M657.4 100.3h3.200l-1.600 1.900z" fill="#7a7a7a"/><g fill="none" stroke="#333" stroke-width="1.2" stroke-linecap="round" stroke-linejoin="round"><rect x="683.6" y="95.9" width="4.200" height="3" rx="0.300"/><path d="M685.7 99.30000000000001v2h-3.600v1.600M685.7 101.30000000000001h3.600v1.300" stroke-width="1.100"/><rect x="679.9000000000001" y="103.60000000000001" width="4.400" height="2.900" rx="0.600" stroke-width="1.500"/><path d="M687.0 103.80000000000001h4.600M687.0 106.30000000000001h4.600" stroke-width="1.500" stroke-linecap="butt"/></g><path d="M697.8 100.3h3.200l-1.600 1.900z" fill="#7a7a7a"/><g fill="none" stroke="#333" stroke-width="1.3" stroke-linecap="round" stroke-linejoin="round"><path d="M720.400 101.200h5.400M730.600 96.300h-1.800q-2.400 0-2.400 2.400v5q0 2.400 2.400 2.400h1.800"/></g><circle cx="720.200" cy="101.200" r="1" fill="#333"/><circle cx="731.300" cy="96.300" r="1.050" fill="#333"/><circle cx="731.300" cy="106.100" r="1.050" fill="#333"/><path d="M738.4 100.3h3.200l-1.600 1.900z" fill="#7a7a7a"/><g fill="none" stroke="#333" stroke-width="1.8" stroke-linecap="round" stroke-linejoin="round"><path d="M764.200 96.700h8.200M764.200 101.500h8.200M764.200 106.300h8.200" stroke-linecap="butt"/></g><text x="761.100" y="98" font-size="3.800" text-anchor="middle" fill="#333" font-family="Liberation Sans, sans-serif">1</text><text x="761.100" y="102.8" font-size="3.800" text-anchor="middle" fill="#333" font-family="Liberation Sans, sans-serif">2</text><text x="761.100" y="107.6" font-size="3.800" text-anchor="middle" fill="#333" font-family="Liberation Sans, sans-serif">3</text><path d="M779.0 100.3h3.200l-1.600 1.900z" fill="#7a7a7a"/><g fill="none" stroke="#333" stroke-width="1.3" stroke-linecap="round" stroke-linejoin="round"><path d="M643.600 159.800l5.300 5.400-4.300 4.400q-.700 .700-1.400 0l-3.900-3.900q-.700-.700 0-1.400z"/><path d="M641.700 158.700l2.600 2.600"/></g><path d="M639.800 166h8.400l-3.800 3.800q-.500 .500-1 0z" fill="#333"/><circle cx="649.900" cy="169.500" r="1.050" fill="#888"/><path d="M657.4 164.10000000000002h3.200l-1.600 1.900z" fill="#7a7a7a"/><g fill="none" stroke="#333" stroke-width="1.2" stroke-linecap="round" stroke-linejoin="round"><path d="M687.200 168.600h-6.800q-.800 0-.800-.800v-7.200q0-.800 .800-.800h9.200q.800 0 .800 .800v4"/></g><path d="M681.400 166.800l2.600-3 1.400 1.400 1.700-2 1.500 2v1.600z" fill="#777"/><circle cx="682.600" cy="162.200" r="0.800" fill="#777"/><path d="M690.200 166v4.200M688.100 168.500l2.100 2.300 2.100-2.300" fill="none" stroke="#333" stroke-width="1.300"/><path d="M697.8 164.10000000000002h3.200l-1.600 1.900z" fill="#7a7a7a"/><g fill="none" stroke="#a0a0a0" stroke-width="1.1" stroke-linecap="round" stroke-linejoin="round"><path d="M725.600 168.600h-6.200q-.800 0-.800-.800v-7.200q0-.800 .800-.800h9q.800 0 .800 .800v2.600"/></g><path d="M720.200 166.800l2.600-3 1.400 1.400 1.800-2 .900 1.300-1.300 2.300z" fill="#b0b0b0"/><circle cx="721.400" cy="162.200" r="0.800" fill="#b0b0b0"/><path d="M727 165.300h6.400v1.300h-6.400zM727.600 167.100h5.200v3.700h-5.200zM728.800 164.200h2.800v1.100h-2.800z" fill="#9a9a9a"/><g fill="none" stroke="#333" stroke-width="1.4" stroke-linecap="round" stroke-linejoin="round"><rect x="760.700" y="159.700" width="11.400" height="10.800" rx="1.300"/></g><text x="766.400" y="168.600" font-size="9.600" text-anchor="middle" fill="#555" font-family="Liberation Sans, sans-serif">A</text><path d="M779.0 164.10000000000002h3.200l-1.600 1.900z" fill="#7a7a7a"/><g fill="none" stroke="#333" stroke-width="1.45" stroke-linecap="round" stroke-linejoin="round"><rect x="639.85" y="225.55" width="3.600" height="3.600" rx="0.500"/><rect x="639.85" y="232.55" width="3.600" height="3.600" rx="0.500"/><rect x="646.5500000000001" y="225.55" width="3.600" height="3.600" rx="0.500"/><rect x="646.5500000000001" y="232.55" width="3.600" height="3.600" rx="0.500"/></g><path d="M657.4 230.20000000000002h3.200l-1.600 1.900z" fill="#7a7a7a"/><g fill="none" stroke="#333" stroke-width="1.45" stroke-linecap="round" stroke-linejoin="round"><rect x="680" y="225.550" width="3.600" height="3.600" rx="0.500"/><rect x="686.800" y="225.550" width="3.600" height="3.600" rx="0.500"/><rect x="680" y="232.650" width="3.600" height="3.600" rx="0.500"/></g><g fill="none" stroke="#333" stroke-width="0.9" stroke-linecap="round" stroke-linejoin="round"><path d="M686.300 232.600h4.800M686.300 234.500h4.800M686.300 236.400h4.800" stroke-linecap="butt"/></g><path d="M697.8 230.20000000000002h3.200l-1.600 1.900z" fill="#7a7a7a"/><path d="M738.4 230.20000000000002h3.200l-1.600 1.900z" fill="#7a7a7a"/><rect x="759.700" y="224.400" width="13.900" height="12.700" fill="#f0f4fd" stroke="#d6def5" stroke-width="0.500"/><rect x="760.9" y="225.6" width="3.300" height="2.600" fill="#f2b32a"/><rect x="765.0" y="225.6" width="3.300" height="2.600" fill="#d9334c"/><rect x="769.1" y="225.6" width="3.300" height="2.600" fill="#b468d8"/><rect x="760.9" y="229.5" width="3.300" height="2.600" fill="#6cc04a"/><rect x="765.0" y="229.5" width="3.300" height="2.600" fill="#dfe6f2"/><rect x="769.1" y="229.5" width="3.300" height="2.600" fill="#8a79e0"/><rect x="760.9" y="233.4" width="3.300" height="2.600" fill="#3bb6c8"/><rect x="765.0" y="233.4" width="3.300" height="2.600" fill="#1e9be2"/><rect x="769.1" y="233.4" width="3.300" height="2.600" fill="#6a7ae8"/><path d="M779.0 230.20000000000002h3.200l-1.600 1.900z" fill="#7a7a7a"/><rect x="633" y="285.500" width="149.600" height="24.500" fill="#fff" stroke="#ececec" stroke-width="0.800"/><rect x="633" y="285.500" width="37.400" height="24.500" fill="#dfdfdf"/><rect x="645.7" y="291.200" width="12" height="12.200" rx="0.800" fill="#ececec" stroke="#8a8a8a" stroke-width="0.700"/><rect x="647.1" y="292.9" width="4.200" height="2.300" fill="#2e2e2e"/><rect x="652.1" y="292.9" width="4.200" height="2.300" fill="#2e2e2e"/><rect x="647.1" y="296.2" width="4.200" height="2.300" fill="#2e2e2e"/><rect x="652.1" y="296.2" width="4.200" height="2.300" fill="#2e2e2e"/><rect x="647.1" y="299.5" width="4.200" height="2.300" fill="#2e2e2e"/><rect x="652.1" y="299.5" width="4.200" height="2.300" fill="#2e2e2e"/><rect x="683.1" y="291.200" width="12" height="12.200" rx="0.800" fill="#ececec" stroke="#8a8a8a" stroke-width="0.700"/><rect x="684.5" y="292.9" width="4.200" height="2.300" fill="#666"/><rect x="689.5" y="292.9" width="4.200" height="2.300" fill="#555"/><rect x="684.5" y="296.2" width="4.200" height="2.300" fill="#bbb"/><rect x="689.5" y="296.2" width="4.200" height="2.300" fill="#2e2e2e"/><rect x="684.5" y="299.5" width="4.200" height="2.300" fill="#444"/><rect x="689.5" y="299.5" width="4.200" height="2.300" fill="#888"/><rect x="720.5" y="291.200" width="12" height="12.200" rx="0.800" fill="#ececec" stroke="#8a8a8a" stroke-width="0.700"/><rect x="721.9" y="292.9" width="4.200" height="2.300" fill="#aaa"/><rect x="726.9" y="292.9" width="4.200" height="2.300" fill="#aaa"/><rect x="721.9" y="296.2" width="4.200" height="2.300" fill="#777"/><rect x="726.9" y="296.2" width="4.200" height="2.300" fill="#777"/><rect x="721.9" y="299.5" width="4.200" height="2.300" fill="#2e2e2e"/><rect x="726.9" y="299.5" width="4.200" height="2.300" fill="#2e2e2e"/><rect x="757.9" y="291.200" width="12" height="12.200" rx="0.800" fill="#ececec" stroke="#8a8a8a" stroke-width="0.700"/><rect x="759.3" y="292.9" width="4.200" height="2.300" fill="#2e2e2e"/><rect x="764.3" y="292.9" width="4.200" height="2.300" fill="#bbb"/><rect x="759.3" y="296.2" width="4.200" height="2.300" fill="#777"/><rect x="764.3" y="296.2" width="4.200" height="2.300" fill="#333"/><rect x="759.3" y="299.5" width="4.200" height="2.300" fill="#2e2e2e"/><rect x="764.3" y="299.5" width="4.200" height="2.300" fill="#999"/><rect x="633" y="352.800" width="75.400" height="24.200" fill="#fff" stroke="#ececec" stroke-width="0.800"/><rect x="633" y="352.800" width="37.400" height="24.200" fill="#dfdfdf"/><path d="M647.200 368.200l.800-2.800 5.600-5.600q.800-.800 1.600 0l1 1q.800 .800 0 1.600l-5.600 5.600z" fill="#333"/><path d="M645.400 370.600h11.600" stroke="#333" stroke-width="1" fill="none"/><path d="M684.400 367.800l.800-2.800 5.600-5.600q.800-.800 1.600 0l1 1q.800 .800 0 1.600l-5.600 5.600z" fill="#333"/><path d="M684 368q-1 2.400 1 2.400t2.600-1.200 2.200 0 2.400 1.200 2.600-1" stroke="#333" stroke-width="0.900" fill="none"/></svg>
<div class="t" style="top:136.2px;left:626px;text-align:left;font-size:8.9px;color:#262626;font-weight:bold;">背景:</div>
<div class="t" style="top:202.4px;left:626px;text-align:left;font-size:8.9px;color:#262626;font-weight:bold;">主题:</div>
<div class="t" style="top:268.1px;left:626px;text-align:left;font-size:8.9px;color:#262626;font-weight:bold;">彩虹色:</div>
<div class="t" style="top:334.9px;left:626px;text-align:left;font-size:8.9px;color:#262626;font-weight:bold;">效果:</div>
<div class="t" style="top:223.7px;left:575.7px;width:300px;text-align:center;font-size:14.3px;color:#333;font-weight:300;transform:scaleX(0.86);">Aa</div>
</div></body></html>
